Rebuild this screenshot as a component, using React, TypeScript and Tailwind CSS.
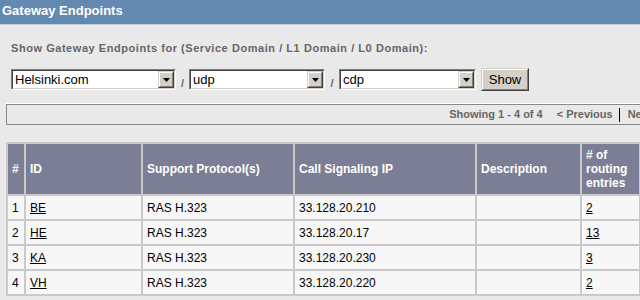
const rows = [
  { n: 1, id: 'BE', proto: 'RAS H.323', ip: '33.128.20.210', desc: '', routes: '2' },
  { n: 2, id: 'HE', proto: 'RAS H.323', ip: '33.128.20.17', desc: '', routes: '13' },
  { n: 3, id: 'KA', proto: 'RAS H.323', ip: '33.128.20.230', desc: '', routes: '3' },
  { n: 4, id: 'VH', proto: 'RAS H.323', ip: '33.128.20.220', desc: '', routes: '2' },
];

function Combo({ value, width }: { value: string; width: string }) {
  // classic sunken combobox with a raised drop button
  return (
    <div
      className={`${width} h-[21px] border border-t-[#808080] border-l-[#808080] border-b-white border-r-white`}
    >
      <div className="flex h-full border border-t-[#404040] border-l-[#404040] border-b-[#d4d0c8] border-r-[#d4d0c8] bg-white">
        <span className="flex-1 pl-[2px] text-[13px] leading-[17px] text-black">{value}</span>
        <div className="w-[16px] h-full border border-t-[#d4d0c8] border-l-[#d4d0c8] border-b-[#404040] border-r-[#404040] bg-[#d4d0c8]">
          <div className="flex h-full items-center justify-center border border-t-white border-l-white border-b-[#808080] border-r-[#808080]">
            <svg width="7" height="4" viewBox="0 0 7 4">
              <path d="M0 0h7L3.5 4z" fill="#000" />
            </svg>
          </div>
        </div>
      </div>
    </div>
  );
}

function Slash() {
  return (
    <span className="flex w-full justify-center pt-[7px] text-[11px] font-bold text-[#666]">/</span>
  );
}

export default function App() {
  return (
    <div className="w-[640px] h-[300px] overflow-hidden bg-[#e9e9e9] font-['Liberation_Sans',Arial,sans-serif]">
      <div className="h-[25px] border-b border-[#c3cedb] bg-[#6389b1] pl-[2px] pt-[3px]">
        <h1 className="text-[13px] font-bold leading-[15px] text-white">Gateway Endpoints</h1>
      </div>

      <p className="mt-[17px] ml-[11px] text-[11px] font-bold leading-[13px] tracking-[0.55px] text-[#666]">
        Show Gateway Endpoints for (Service Domain / L1 Domain / L0 Domain):
      </p>

      <div className="mt-[13px] ml-[11px] flex h-[23px] items-center">
        <Combo value="Helsinki.com" width="w-[165px]" />
        <div className="w-[13px]">
          <Slash />
        </div>
        <Combo value="udp" width="w-[136px]" />
        <div className="w-[14px]">
          <Slash />
        </div>
        <Combo value="cdp" width="w-[137px]" />
        <button className="ml-[5px] h-[23px] w-[48px] border border-t-[#d4d0c8] border-l-[#d4d0c8] border-b-[#404040] border-r-[#404040] bg-[#d4d0c8]">
          <div className="flex h-full items-center justify-center border border-t-white border-l-white border-b-[#808080] border-r-[#808080] text-[13px] text-black">
            Show
          </div>
        </button>
      </div>

      <div className="mt-[12px] ml-[6px] w-[664px] border-t border-white">
        <div className="flex h-[21px] items-center justify-end border border-[#888] pr-[8px] text-[11px] font-bold text-[#666]">
          <span>Showing 1 - 4 of 4</span>
          <span className="ml-[14px]">&lt; Previous</span>
          <span className="ml-[6px] h-[14px] border-l border-black" />
          <span className="ml-[8px]">Next &gt;</span>
        </div>
      </div>

      <table className="mt-[17px] ml-[6px] w-[635px] table-fixed border-separate border-spacing-[2px] bg-[#c9c9c9]">
        <thead>
          <tr className="text-left text-[12px] font-bold leading-[14px] text-white">
            <th className="h-[50px] w-[16px] bg-[#7b7e95] px-[4px] align-middle">#</th>
            <th className="w-[115px] bg-[#7b7e95] px-[4px] align-middle">ID</th>
            <th className="w-[150px] bg-[#7b7e95] px-[4px] align-middle">Support Protocol(s)</th>
            <th className="w-[180px] bg-[#7b7e95] px-[4px] align-middle">Call Signaling IP</th>
            <th className="w-[103px] bg-[#7b7e95] px-[4px] align-middle">Description</th>
            <th className="w-[57px] bg-[#7b7e95] px-[4px] align-middle">
              # of
              <br />
              routing
              <br />
              entries
            </th>
          </tr>
        </thead>
        <tbody>
          {rows.map((r) => (
            <tr key={r.n} className="text-[12px] leading-[14px] text-black">
              <td className="h-[23px] bg-[#f7f7f7] px-[4px] align-middle">{r.n}</td>
              <td className="bg-[#f7f7f7] px-[4px] align-middle">
                <a className="underline">{r.id}</a>
              </td>
              <td className="bg-[#f7f7f7] px-[4px] align-middle">{r.proto}</td>
              <td className="bg-[#f7f7f7] px-[4px] align-middle">{r.ip}</td>
              <td className="bg-[#f7f7f7] px-[4px] align-middle">{r.desc}</td>
              <td className="bg-[#f7f7f7] px-[4px] align-middle">
                <a className="underline">{r.routes}</a>
              </td>
            </tr>
          ))}
        </tbody>
      </table>
    </div>
  );
}
